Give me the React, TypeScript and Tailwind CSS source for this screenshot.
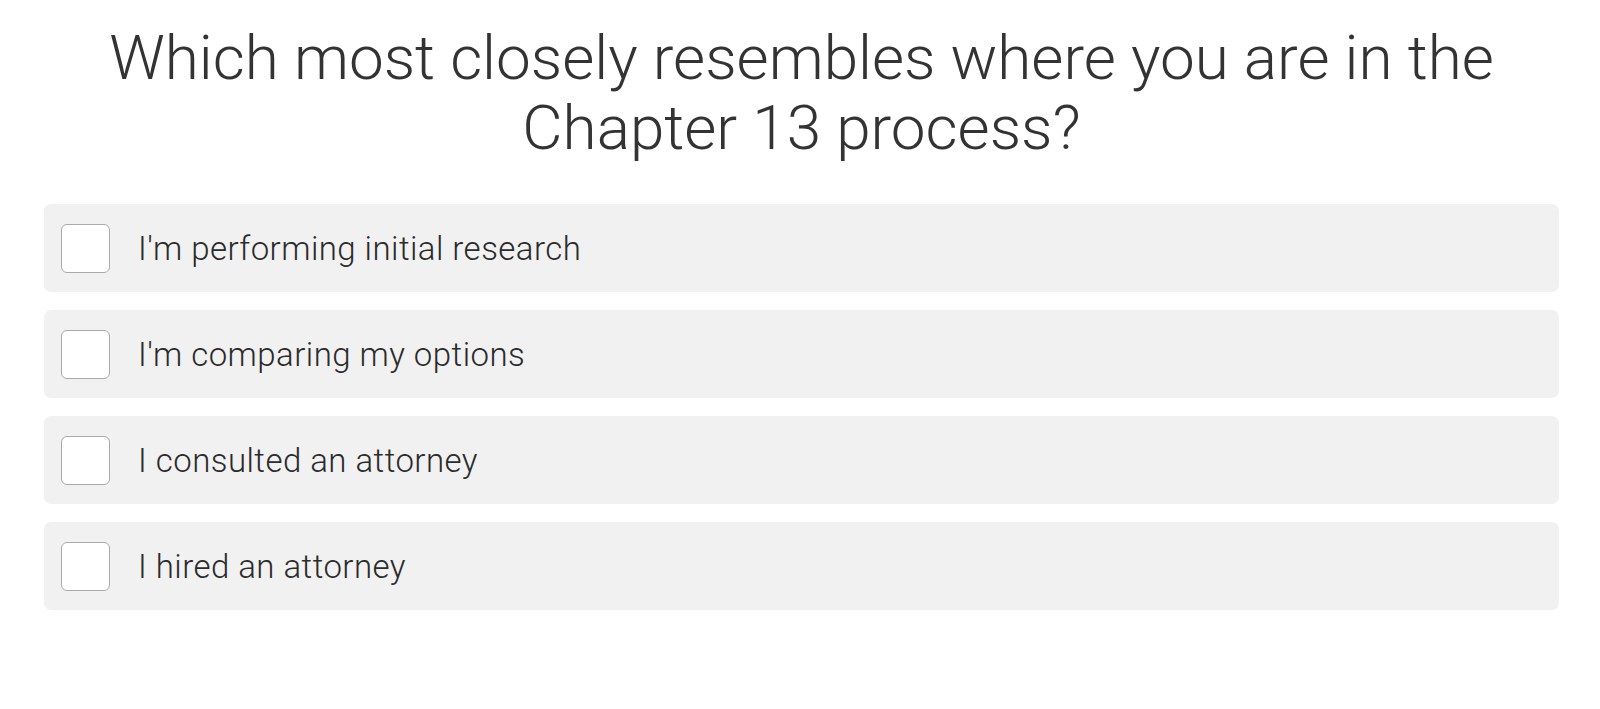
const options = [
  "I'm performing initial research",
  "I'm comparing my options",
  "I consulted an attorney",
  "I hired an attorney",
];

export default function App() {
  return (
    <div
      className="min-h-[709px] bg-white text-[#333333] font-light"
      style={{ fontFamily: '"Helvetica Neue", Roboto, "Liberation Sans", Arial, sans-serif' }}
    >
      <div className="pl-[44px] pr-[41px] pt-[23px]">
        <h1 className="text-center text-[62px] leading-[70px] font-light">
          Which most closely resembles where you are in the
          <br />
          Chapter 13 process?
        </h1>

        <div className="mt-[41px] flex flex-col gap-[18px]">
          {options.map((label) => (
            <label
              key={label}
              className="flex h-[88px] cursor-pointer items-center rounded-[7px] bg-[#f1f1f1] pl-[17px]"
            >
              <span className="h-[49px] w-[49px] shrink-0 rounded-[6px] border border-[#aaaaaa] bg-white" />
              <span className="ml-[28px] text-[33px] leading-none tracking-[0.45px] text-[#2b2b2b]">
                {label}
              </span>
            </label>
          ))}
        </div>
      </div>
    </div>
  );
}
